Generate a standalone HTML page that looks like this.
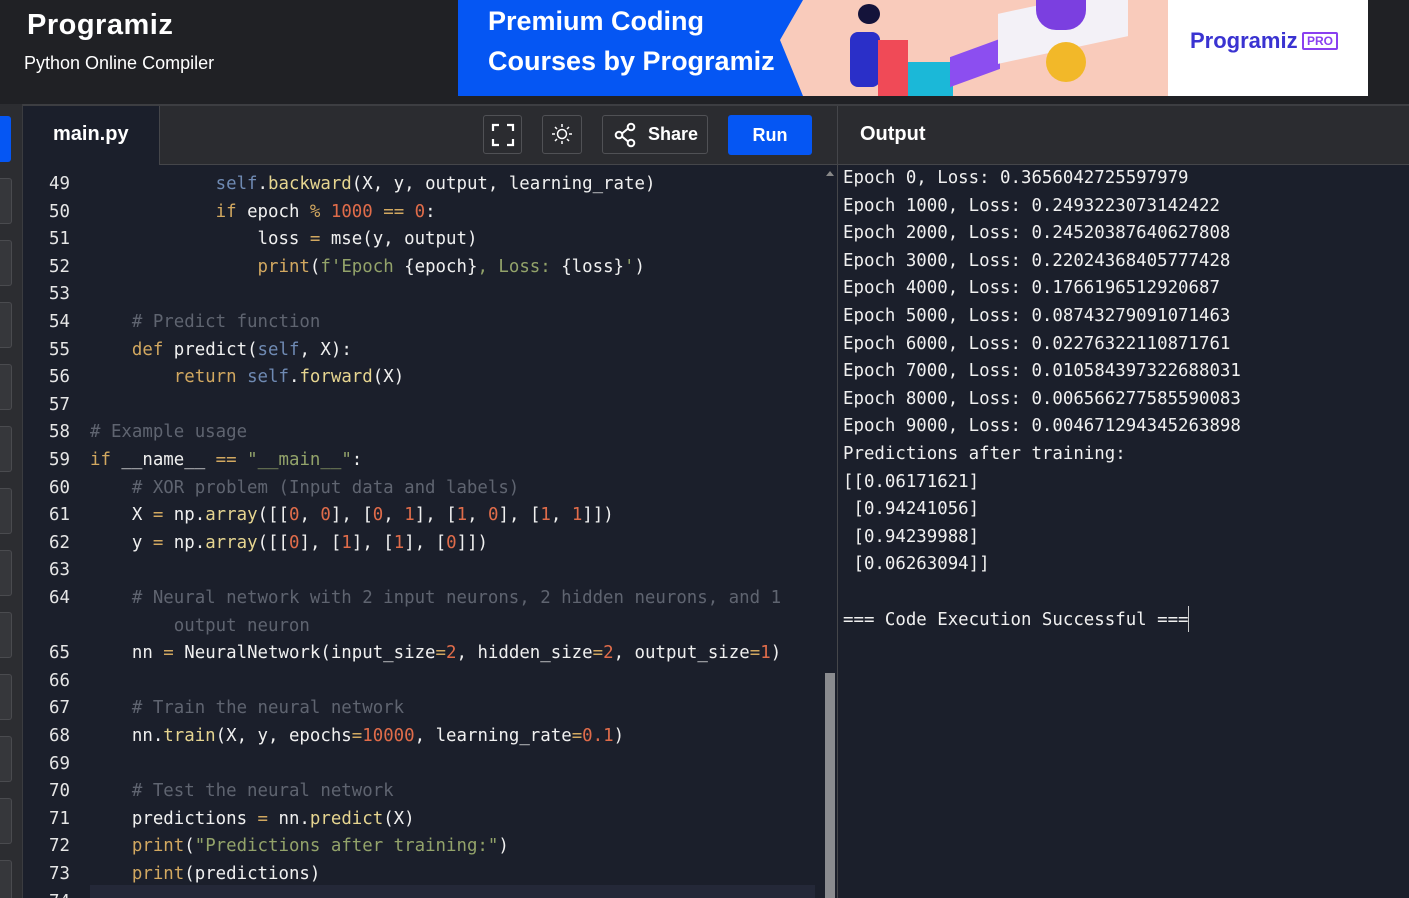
<!DOCTYPE html>
<html><head><meta charset="utf-8"><style>
*{margin:0;padding:0;box-sizing:border-box}
html,body{width:1409px;height:898px;overflow:hidden}
body{background:#1b1f2b;font-family:"Liberation Sans",sans-serif;position:relative}
.a{position:absolute}
.mono{font-family:"DejaVu Sans Mono","Liberation Mono",monospace;font-size:17.4px;white-space:pre}
.ln{position:absolute;left:0;width:70px;text-align:right;color:#e6e6e6}
.cl{position:absolute;color:#f0f0f0}
.k{color:#d2a860}.s{color:#6f8ab3}.n{color:#e06c4a}.st{color:#93a36a}.c{color:#5f6470}.f{color:#e6d590}.op{color:#d2a860}
</style></head><body>
<div class="a" style="left:0;top:0;width:1409px;height:104px;background:#202125"></div>
<div class="a" style="left:27px;top:9px;font-size:29px;font-weight:bold;color:#fff;letter-spacing:0.5px">Programiz</div>
<div class="a" style="left:24px;top:53px;font-size:18px;color:#fff">Python Online Compiler</div>
<div class="a" style="left:458px;top:0;width:710px;height:96px;background:#f9cbbb;overflow:hidden">
 <div class="a" style="left:0;top:0;width:372px;height:96px;background:#0556f3;clip-path:polygon(0 0,345px 0,322px 40px,345px 96px,0 96px)"></div>
 <div class="a" style="left:30px;top:1px;font-size:27px;font-weight:bold;color:#fff;line-height:40px">Premium Coding<br>Courses by Programiz</div>
 <div class="a" style="left:392px;top:32px;width:30px;height:55px;background:#2a2fc8;border-radius:8px"></div>
 <div class="a" style="left:420px;top:40px;width:30px;height:56px;background:#f04a57"></div>
 <div class="a" style="left:400px;top:4px;width:22px;height:20px;background:#14133a;border-radius:50%"></div>
 <div class="a" style="left:450px;top:62px;width:45px;height:34px;background:#1bb8d8"></div>
 <div class="a" style="left:492px;top:48px;width:50px;height:30px;background:#8c4ef0;transform:skewY(-20deg)"></div>
 <div class="a" style="left:540px;top:0;width:130px;height:50px;background:#f3f1f7;transform:skewY(-12deg)"></div>
 <div class="a" style="left:578px;top:0;width:50px;height:30px;background:#7b3fe0;border-radius:0 0 20px 20px"></div>
 <div class="a" style="left:588px;top:42px;width:40px;height:40px;background:#f2b829;border-radius:50%"></div>
</div>
<div class="a" style="left:1168px;top:0;width:200px;height:96px;background:#fff"></div>
<div class="a" style="left:1190px;top:28px;font-size:22px;font-weight:bold;color:#3a33d1">Programiz</div>
<div class="a" style="left:1302px;top:32px;font-size:12px;font-weight:bold;color:#8a3ff0;border:2px solid #8a3ff0;padding:0 3px;border-radius:2px">PRO</div>
<div class="a" style="left:0;top:104px;width:23px;height:794px;background:#2c2d31;border-right:1px solid #3b3c40"></div>
<div class="a" style="left:0;top:116px;width:11px;height:46px;background:#0556f3;border-radius:0 3px 3px 0"></div>
<div id="sb"></div>
<div class="a" style="left:23px;top:104px;width:1386px;height:61px;background:#2b2c30;border-top:2px solid #3d3e42;border-bottom:1px solid #45464a"></div>
<div class="a" style="left:23px;top:106px;width:137px;height:59px;background:#1b1f2b;border-right:1px solid #45464a"></div>
<div class="a" style="left:53px;top:123px;font-size:20px;font-weight:bold;color:#fff">main.py</div>
<div class="a" style="left:483px;top:115px;width:39px;height:39px;border:1px solid #505155;border-radius:3px"></div>
<svg class="a" style="left:491px;top:123px" width="24" height="24" viewBox="0 0 24 24" fill="none" stroke="#fff" stroke-width="2.2"><path d="M2 8V2h6M16 2h6v6M22 16v6h-6M8 22H2v-6"/></svg>
<div class="a" style="left:542px;top:115px;width:40px;height:39px;border:1px solid #505155;border-radius:3px"></div>
<svg class="a" style="left:551px;top:123px" width="22" height="22" viewBox="0 0 22 22" fill="none" stroke="#fff" stroke-width="1.5"><circle cx="11" cy="11" r="4.5"/><path d="M11 1v3M11 18v3M1 11h3M18 11h3M4 4l2 2M16 16l2 2M4 18l2-2M16 6l2-2"/></svg>
<div class="a" style="left:602px;top:115px;width:106px;height:39px;border:1px solid #505155;border-radius:3px"></div>
<svg class="a" style="left:613px;top:122px" width="24" height="26" viewBox="0 0 24 26" fill="none" stroke="#fff" stroke-width="2"><circle cx="18" cy="5" r="3.3"/><circle cx="6" cy="13" r="3.3"/><circle cx="18" cy="21" r="3.3"/><path d="M9 11.5l6-5M9 14.5l6 5"/></svg>
<div class="a" style="left:648px;top:124px;font-size:18px;font-weight:bold;color:#fff">Share</div>
<div class="a" style="left:728px;top:115px;width:84px;height:40px;background:#0556f3;border-radius:3px;color:#fff;font-size:18px;font-weight:bold;text-align:center;line-height:40px">Run</div>
<div class="a" style="left:837px;top:106px;width:1px;height:792px;background:#45464a"></div>
<div class="a" style="left:860px;top:123px;font-size:20px;font-weight:bold;color:#fff">Output</div>
<div class="a" style="left:826px;top:171px;border:4px solid transparent;border-bottom:5px solid #888;border-top:none"></div>
<div class="a" style="left:825px;top:673px;width:10px;height:225px;background:#8a8b8f"></div>
<div class="a" style="left:90px;top:885px;width:725px;height:13px;background:#242838"></div>
<div class="a mono" style="left:0;top:171px;width:820px;height:727px;overflow:hidden;line-height:27.6px" id="code"></div>
<div class="a mono" style="left:843px;top:165px;line-height:27.6px;color:#f0f0f0">Epoch 0, Loss: 0.3656042725597979
Epoch 1000, Loss: 0.2493223073142422
Epoch 2000, Loss: 0.24520387640627808
Epoch 3000, Loss: 0.22024368405777428
Epoch 4000, Loss: 0.1766196512920687
Epoch 5000, Loss: 0.08743279091071463
Epoch 6000, Loss: 0.02276322110871761
Epoch 7000, Loss: 0.010584397322688031
Epoch 8000, Loss: 0.006566277585590083
Epoch 9000, Loss: 0.004671294345263898
Predictions after training:
[[0.06171621]
 [0.94241056]
 [0.94239988]
 [0.06263094]]

=== Code Execution Successful ===</div>
<div class="a" style="left:1188px;top:606px;width:1px;height:26px;background:#ccc"></div>
<script>
var sb=document.getElementById('sb');
for(var i=0;i<12;i++){var d=document.createElement('div');d.className='a';d.style.cssText='left:0;top:'+(178+i*62)+'px;width:12px;height:46px;background:#36373b;border:1px solid #4a4b4f;border-left:none;border-radius:0 3px 3px 0';sb.appendChild(d);}
var L=[
['49','      <span class="s">self</span>.<span class="f">backward</span>(X, y, output, learning_rate)'],
['50','      <span class="k">if</span> epoch <span class="op">%</span> <span class="n">1000</span> <span class="op">==</span> <span class="n">0</span>:'],
['51','        loss <span class="op">=</span> mse(y, output)'],
['52','        <span class="k">print</span>(<span class="st">f\'Epoch </span>{epoch}<span class="st">, Loss: </span>{loss}<span class="st">\'</span>)'],
['53',''],
['54','  <span class="c"># Predict function</span>'],
['55','  <span class="k">def</span> predict(<span class="s">self</span>, X):'],
['56','    <span class="k">return</span> <span class="s">self</span>.<span class="f">forward</span>(X)'],
['57',''],
['58','<span class="c"># Example usage</span>'],
['59','<span class="k">if</span> __name__ <span class="op">==</span> <span class="st">"__main__"</span>:'],
['60','  <span class="c"># XOR problem (Input data and labels)</span>'],
['61','  X <span class="op">=</span> np.<span class="f">array</span>([[<span class="n">0</span>, <span class="n">0</span>], [<span class="n">0</span>, <span class="n">1</span>], [<span class="n">1</span>, <span class="n">0</span>], [<span class="n">1</span>, <span class="n">1</span>]])'],
['62','  y <span class="op">=</span> np.<span class="f">array</span>([[<span class="n">0</span>], [<span class="n">1</span>], [<span class="n">1</span>], [<span class="n">0</span>]])'],
['63',''],
['64','  <span class="c"># Neural network with 2 input neurons, 2 hidden neurons, and 1</span>'],
['','    <span class="c">output neuron</span>'],
['65','  nn <span class="op">=</span> NeuralNetwork(input_size<span class="op">=</span><span class="n">2</span>, hidden_size<span class="op">=</span><span class="n">2</span>, output_size<span class="op">=</span><span class="n">1</span>)'],
['66',''],
['67','  <span class="c"># Train the neural network</span>'],
['68','  nn.<span class="f">train</span>(X, y, epochs<span class="op">=</span><span class="n">10000</span>, learning_rate<span class="op">=</span><span class="n">0.1</span>)'],
['69',''],
['70','  <span class="c"># Test the neural network</span>'],
['71','  predictions <span class="op">=</span> nn.<span class="f">predict</span>(X)'],
['72','  <span class="k">print</span>(<span class="st">"Predictions after training:"</span>)'],
['73','  <span class="k">print</span>(predictions)'],
['74','']];
var h='';
L.forEach(function(l,i){var t=i*27.6;h+='<div class="ln" style="top:'+t+'px">'+l[0]+'</div><div class="cl" style="left:90px;top:'+t+'px">'+l[1].replace(/^ +/,function(m){return m.replace(/ /g,'  ')})+'</div>';});
document.getElementById('code').innerHTML=h;
</script>
</body></html>
